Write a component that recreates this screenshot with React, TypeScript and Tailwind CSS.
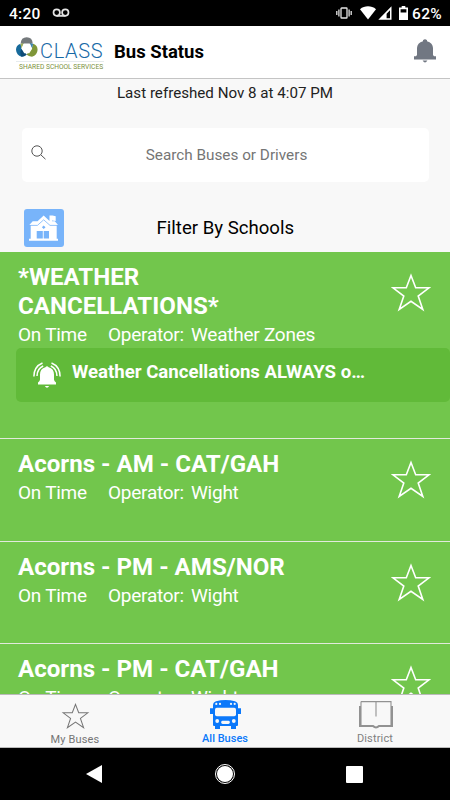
import type { ReactNode } from 'react';

interface Bus {
  name: string;
  operator: string;
  alert?: string;
}

const buses: Bus[] = [
  {
    name: '*WEATHER CANCELLATIONS*',
    operator: 'Weather Zones',
    alert: 'Weather Cancellations ALWAYS o…',
  },
  { name: 'Acorns - AM - CAT/GAH', operator: 'Wight' },
  { name: 'Acorns - PM - AMS/NOR', operator: 'Wight' },
  { name: 'Acorns - PM - CAT/GAH', operator: 'Wight' },
];

function Star({ className, strokeWidth }: { className: string; strokeWidth: number }) {
  return (
    <svg viewBox="0 0 40 38" className={className} fill="none" stroke="currentColor" strokeWidth={strokeWidth}>
      <path d="M20 2 L24.7 14.3 H38 L27.2 22.6 L31.8 36 L20 27.8 L8.2 36 L12.8 22.6 L2 14.3 H15.3 Z" />
    </svg>
  );
}

function StatusBar() {
  return (
    <div className="flex h-[26px] shrink-0 items-center bg-black pl-[9px] pr-2 text-white">
      <span className="mt-[3px] text-[15.5px] font-medium leading-none tracking-[0.3px]">4:20</span>
      <svg viewBox="0 0 18 10" className="ml-[11px] h-[10px] w-[18px]" fill="none" stroke="#e5e5e5" strokeWidth="1.7">
        <circle cx="4.7" cy="4.6" r="3.2" />
        <circle cx="13.3" cy="4.6" r="3.2" />
        <path d="M4.7 7.9 H13.3" />
      </svg>
      <svg viewBox="0 0 16 12" className="ml-auto h-3 w-4" fill="none" stroke="#e5e5e5" strokeWidth="1.3">
        <rect x="5" y="1" width="6" height="10" rx="0.6" />
        <path d="M2.9 2.5 V9.5 M13.1 2.5 V9.5 M0.8 4 V8 M15.2 4 V8" />
      </svg>
      <svg viewBox="0 0 16 14" className="ml-2 h-[14px] w-4" fill="currentColor">
        <path d="M0 3.2 C4.6 -0.6 11.4 -0.6 16 3.2 L8 13.6 Z" />
      </svg>
      <svg viewBox="0 0 14 14" className="ml-[2px] h-[14px] w-[14px]" fill="currentColor">
        <path fillRule="evenodd" d="M0.3 13.7 L13.5 0.3 V13.7 Z M8.6 7.8 V12.2 H12 V4.2 Z" />
      </svg>
      <svg viewBox="0 0 9 14" className="ml-[7px] h-[14px] w-[9px]" fill="currentColor">
        <path fillRule="evenodd" d="M2.7 0 H6.3 V1.5 H9 V14 H0 V1.5 H2.7 Z M1.6 3.2 V6.6 H7.4 V3.2 Z" />
      </svg>
      <span className="ml-1 mt-[3px] text-[15.5px] font-medium leading-none tracking-[0.3px]">62%</span>
    </div>
  );
}

function Logo() {
  return (
    <div className="w-[88px] pt-1">
      <div className="flex h-[21px] items-center">
        <svg viewBox="0 0 22 21" className="-mt-[2px] h-[21px] w-[22px] shrink-0">
          <path d="M4.7 6.5 Q5 0.3 10.7 0.3 Q16.4 0.3 16.7 6.5 L14 7 H7.4 Z" fill="#74797c" />
          <path d="M4.4 6.8 Q0 8.2 0 12.8 Q0.4 18.4 5.6 19.7 Q8.4 19.6 10 18 L6 12.5 Z" fill="#176a9b" />
          <path d="M17.2 6.8 Q21.6 8.2 21.6 12.8 Q21.2 18.4 16 19.7 Q12.6 19.7 10.4 17.6 L15.4 12.5 Z" fill="#7f9638" />
          <path d="M4.4 6.8 L7.8 6.3 L5.8 12 Z" fill="#9dad5c" />
          <path d="M17.2 6.8 L13.8 6.3 L15.8 12 Z" fill="#3c83ad" />
          <path d="M5.6 19.7 Q3 16 5.6 12 L10.8 17.5 Q9 19.6 5.6 19.7 Z" fill="#0f4b77" />
          <path d="M7.8 6.4 H13.7 L16.2 11.5 L13.3 16.3 H8.3 L5.4 11.5 Z" fill="#fff" />
        </svg>
        <span className="ml-[2px] mt-[5px] text-[20px] font-light leading-none tracking-[0.65px] text-[#1769a6]">CLASS</span>
      </div>
      <div className="mt-[2px] h-px bg-[#e6ebee]" />
      <div className="ml-[3px] mt-px whitespace-nowrap text-[6.65px] leading-[8px] text-[#7b9140]">
        SHARED SCHOOL SERVICES
      </div>
    </div>
  );
}

function Header() {
  return (
    <header className="flex h-[53px] shrink-0 items-center border-b border-[#c4c4c4] bg-white pl-4 pr-[14px]">
      <Logo />
      <h1 className="ml-[10px] mt-px text-[18.5px] font-bold leading-none text-black">Bus Status</h1>
      <svg viewBox="0 0 22 24" className="mb-[3px] ml-auto h-6 w-[22px]" fill="#717782">
        <path d="M9 1.2 Q11 -0.6 13 1.2 V2.2 Q18.8 3.8 19 9 V16 L20 17.2 H22 V20.4 H0 V17.2 H2 L3 16 V9 Q3.2 3.8 9 2.2 Z" />
        <path d="M8.6 21.6 H13.4 Q11 25.4 8.6 21.6 Z" />
      </svg>
    </header>
  );
}

function SchoolIcon() {
  return (
    <svg viewBox="0 0 40 38" className="h-[38px] w-10 rounded-[3px] bg-[#78b4fa]" fill="#fff">
      <path d="M5.3 16 L8.7 12.3 H13.5 L19.7 6.5 L25.5 12 V6.5 H28.5 L31.7 7.3 V12 L28 11.6 V12.3 H30.8 L34 16 H32.7 V29.7 H34 V31.8 H5 V29.7 H6.7 V16 Z" />
      <path d="M5 16.4 H13.4 L19.7 10.8 L26 16.4 H34.4" fill="none" stroke="#78b4fa" strokeWidth="0.8" />
      <path d="M19.7 16.4 L21.5 18.2 L19.7 20 L17.9 18.2 Z" fill="#78b4fa" />
      <path d="M12.7 22 H18.8 V29.5 H12.7 Z M19.7 22 H25 V29.5 H19.7 Z" fill="#78b4fa" />
    </svg>
  );
}

function AlertBell() {
  return (
    <svg viewBox="0 0 28 27" className="h-[27px] w-7 shrink-0" fill="#fff">
      <path d="M12.4 5.2 Q14 3.2 15.6 5.2 Q21 6.8 21 12.5 V17.5 Q21 19 23 20.6 V22.6 H5 V20.6 Q7 19 7 17.5 V12.5 Q7 6.8 12.4 5.2 Z" />
      <path d="M11.8 24 H16.2 Q14 27.6 11.8 24 Z" />
      <g fill="none" stroke="#fff" strokeWidth="1.5">
        <path d="M9.5 1 Q1 4.5 0.9 14.5" />
        <path d="M10.2 4 Q4.2 6.5 4 14" />
        <path d="M18.5 1 Q27 4.5 27.1 14.5" />
        <path d="M17.8 4 Q23.8 6.5 24 14" />
      </g>
    </svg>
  );
}

function BusRow({ bus }: { bus: Bus }) {
  return (
    <li
      className={`shrink-0 border-b border-[#e2e9dd] bg-[#72c64c] pl-[18px] pt-[11px] text-white ${
        bus.alert ? 'h-[187px]' : 'h-[102.5px]'
      }`}
    >
      <div className="flex items-start justify-between pr-[19px]">
        <div>
          <h2 className="w-[280px] text-[24.1px] font-bold leading-[29px]">{bus.name}</h2>
          <div className="flex text-[19px] leading-[27px] tracking-[-0.25px]">
            <span className="w-[90px]">On Time</span>
            <span className="w-[83px]">Operator:</span>
            <span>{bus.operator}</span>
          </div>
        </div>
        <Star className="mt-[10px] h-[39px] w-10" strokeWidth={1.6} />
      </div>
      {bus.alert && (
        <div className="-ml-[2px] flex h-[54px] items-center rounded-[5px] bg-[#61ba39] pl-[17px]">
          <AlertBell />
          <span className="mb-[6px] ml-[11px] text-[18.6px] font-bold leading-none">{bus.alert}</span>
        </div>
      )}
    </li>
  );
}

function Tab({ label, className, children }: { label: string; className: string; children: ReactNode }) {
  return (
    <button className={`flex flex-1 flex-col items-center ${className}`}>
      {children}
      <span className="text-[11px] leading-[14px]">{label}</span>
    </button>
  );
}

function TabBar() {
  return (
    <nav className="flex h-[54px] shrink-0 border-y border-[#bababa] bg-[#f8f8f8]">
      <Tab label="My Buses" className="pt-2 tracking-[0.15px] text-[#757575]">
        <Star className="mb-1 h-[27px] w-[29px]" strokeWidth={1.5} />
      </Tab>
      <Tab label="All Buses" className="pt-[5px] font-medium text-[#0b78fa]">
        <svg viewBox="0 0 31 29" className="mb-[3px] h-[29px] w-[31px]" fill="currentColor">
          <path d="M6 1.2 Q15.5 -1 25 1.2 Q28 2.2 28 5.5 V8.3 H31 V14 H28 V25 Q28 26 27 26 H26 V29 H21 V26 H10 V29 H5 V26 H4 Q3 26 3 25 V14 H0 V8.3 H3 V5.5 Q3 2.2 6 1.2 Z" />
          <g fill="#f8f8f8">
            <rect x="5" y="7.8" width="21" height="8.4" rx="1.8" />
            <rect x="11.2" y="20.8" width="8.6" height="3.2" rx="1.4" />
            <circle cx="7.2" cy="21" r="1.9" />
            <circle cx="23.8" cy="21" r="1.9" />
            <circle cx="6.3" cy="3.9" r="1.1" />
            <circle cx="10" cy="3.9" r="1.1" />
            <circle cx="21" cy="3.9" r="1.1" />
            <circle cx="24.7" cy="3.9" r="1.1" />
          </g>
        </svg>
      </Tab>
      <Tab label="District" className="pt-[6px] tracking-[0.15px] text-[#808080]">
        <svg viewBox="0 0 34 28" className="mb-[3px] ml-[2px] h-7 w-[34px]" fill="none" stroke="#929292">
          <path d="M2 0.6 H32 V25 M2 0.6 V25 M17 1 V15.5" strokeWidth="1.1" />
          <path d="M1 5 V25 H14 Q17 28 20 25 H33 V5" strokeWidth="2" />
        </svg>
      </Tab>
    </nav>
  );
}

function SystemNav() {
  return (
    <div className="flex h-[52px] shrink-0 items-center bg-black pl-[86px] pr-[87px]">
      <svg viewBox="0 0 16 18" className="h-[18px] w-4" fill="#fff">
        <path d="M0 9 L16 0 V18 Z" />
      </svg>
      <svg viewBox="0 0 20 20" className="ml-[113px] h-5 w-5">
        <circle cx="10" cy="10" r="9.5" fill="none" stroke="#fff" />
        <circle cx="10" cy="10" r="8" fill="#fff" />
      </svg>
      <div className="ml-auto h-[17px] w-[17px] rounded-[1px] bg-white" />
    </div>
  );
}

export default function App() {
  return (
    <div className="flex h-[800px] w-[450px] flex-col overflow-hidden bg-[#f8f8f8] font-[Roboto,sans-serif]">
      <StatusBar />
      <Header />
      <section className="h-[173px] shrink-0">
        <p className="pt-1 text-center text-[15.15px] leading-[20px] text-[#222]">Last refreshed Nov 8 at 4:07 PM</p>
        <div className="ml-[22px] mt-[25px] flex h-[54px] w-[407px] rounded-[5px] bg-white">
          <svg viewBox="0 0 15 15" className="ml-[9px] mt-[17px] h-[15px] w-[15px]" fill="none" stroke="#555" strokeWidth="1">
            <circle cx="6" cy="6" r="5.2" />
            <path d="M9.8 9.8 L14.5 14.2" />
          </svg>
          <span className="mr-[22px] flex-1 text-center text-[15.3px] leading-[54px] text-[#757575]">
            Search Buses or Drivers
          </span>
        </div>
        <div className="mt-[27px] flex pl-6">
          <SchoolIcon />
          <span className="ml-[92.5px] text-[18.6px] leading-[38px] text-black">Filter By Schools</span>
        </div>
      </section>
      <ul className="flex min-h-0 flex-1 flex-col overflow-hidden">
        {buses.map((bus) => (
          <BusRow key={bus.name} bus={bus} />
        ))}
      </ul>
      <TabBar />
      <SystemNav />
    </div>
  );
}
